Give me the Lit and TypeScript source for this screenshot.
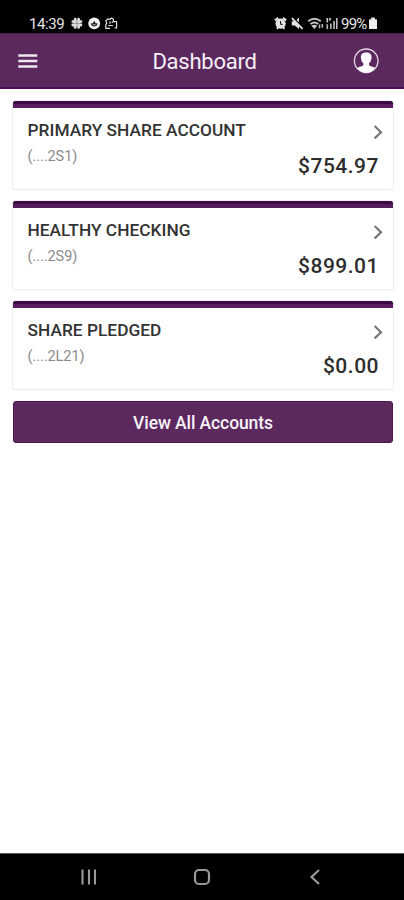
import { LitElement, html, css } from "lit";
import { customElement, property } from "lit/decorators.js";

@customElement("status-bar")
class StatusBar extends LitElement {
  static styles = css`
    :host { display: flex; justify-content: space-between; align-items: flex-start; height: 33px; background: #000; color: #e4e4e4; box-sizing: border-box; padding: 15px 26px 0 29px; font: 400 15px/17px Roboto, sans-serif; }
    .group { display: flex; height: 17px; align-items: center; }
    .time { letter-spacing: -0.4px; width: 41px; padding-top: 2px; }
    .percent { letter-spacing: -0.8px; width: 27px; padding-top: 2px; margin-left: -1px; }
    svg { display: block; flex: none; }
  `;
  render() {
    return html`
      <div class="group">
        <span class="time">14:39</span>
        <svg width="50" height="17" viewBox="0 0 50 17" fill="none" stroke="#dedede">
          <path d="M5.2 4.200V12.400M8.600 4.200V12.400M2.800 6.600H11M2.800 10H11" stroke-width="2.800" stroke-linecap="round"/>
          <path d="M6.900 3V13.600M1.600 8.300H12.200" stroke="#777" stroke-width=".6"/>
          <circle cx="24.200" cy="8.400" r="5.900" fill="#f0f0f0" stroke="none"/>
          <path d="M20.600 8.600l2.200-.3 1.400-2.500 1.400 2.500 2.200.3q-1 3-3.600 3t-3.600-3z" fill="#222" stroke="none"/>
          <path d="M22.800 9.800h2.800" stroke="#ddd" stroke-width=".8"/>
          <path d="M40 13.400h-4.200v-4l.9-.8-.8-3 2.300-1.700 1.500.5L41.600 3l1.800 1.300v2.300h3.200v6.300h-1.900" stroke-width="1.200" stroke-linejoin="round"/>
          <path d="M40 6.200v2.600M42.300 6.500v1.600M38.300 10.500h4.600" stroke-width="1.200"/>
        </svg>
      </div>
      <div class="group">
        <svg width="68" height="17" viewBox="0 0 68 17">
          <circle cx="6.600" cy="8.600" r="5.100" fill="#e4e4e4"/>
          <path d="M1 5.400l3.200-2.500M12.200 5.400L9 2.900M2.800 13.800l1.600-1.500M10.400 13.800l-1.600-1.500" stroke="#e4e4e4" stroke-width="2"/>
          <path d="M6.600 5.900v3.100l2 .6" stroke="#222" stroke-width="1.100" fill="none"/>
          <path d="M17.800 6.200h3l4.200-3.500v11.200l-4.200-3.500h-3z" fill="#e4e4e4"/>
          <path d="M19 2.600l10.200 10" stroke="#000" stroke-width="1.500"/>
          <path d="M17.900 3.200l10.700 10.600" stroke="#e4e4e4" stroke-width="1.800"/>
          <g fill="none" stroke="#c4c4c4" stroke-width="2">
            <path d="M34.200 6.300q6.300-5 12.600 0M36.500 9q3.900-3 7.800 0"/>
          </g>
          <path d="M37.400 10.800q2.900-2.200 5.800 0l-2.900 3.100z" fill="#ccc"/>
          <path d="M45.500 9.500v3.800M48.300 9v3.800" stroke="#bbb" stroke-width="1.500"/>
          <path d="M53.300 3v4.400M56 3v2.500" stroke="#c8c8c8" stroke-width="1.700"/>
          <path d="M53.300 9.300v4.800M56.800 8.500v5.600M60 6v8.100M62.800 3v11.100" stroke="#bbb" stroke-width="1.600"/>
        </svg>
        <span class="percent">99%</span>
        <svg width="10" height="17" viewBox="0 0 10 17"><path d="M3.200 2.600h3.600v1.600h1.400q.8 0 .8.800v8.200q0 .9-.8.900H1.800q-.8 0-.8-.9V5q0-.8.8-.8h1.400z" fill="#ececec"/></svg>
      </div>`;
  }
}

@customElement("account-card")
class AccountCard extends LitElement {
  @property() name = "";
  @property() mask = "";
  @property() balance = "";
  static styles = css`
    :host { display: block; box-sizing: border-box; height: 88px; background: #fff; border-radius: 3px; box-shadow: 0 0 0 1px #efefef, 0 1px 2px #e2e2e2; overflow: hidden; font-family: Roboto, sans-serif; }
    .bar { height: 7px; box-sizing: border-box; background: #561c5d; border-top: 3px solid #3a0c43; }
    .body { display: grid; grid-template-columns: 1fr auto; padding: 12px 9px 0 14.500px; }
    .name { font-size: 17.300px; line-height: 21px; font-weight: 500; color: #333; white-space: nowrap; letter-spacing: .03px; }
    .mask { font-size: 14.500px; line-height: 18px; color: #8a8a8a; margin-top: 7px; letter-spacing: -.05px; }
    .arrow { margin-top: 4px; display: block; }
    .balance { font-size: 21px; line-height: 26px; font-weight: 500; color: #2d2d2d; letter-spacing: .5px; text-align: right; margin: 13px 5px 0 0; }
    .left, .right { display: flex; flex-direction: column; }
    .right { align-items: flex-end; }
  `;
  render() {
    return html`
      <div class="bar"></div>
      <div class="body">
        <div class="left"><div class="name">${this.name}</div><div class="mask">${this.mask}</div></div>
        <div class="right">
          <svg class="arrow" width="12" height="16" viewBox="0 0 12 16"><path d="M2.600 2L9 8.200l-6.400 6.200" fill="none" stroke="#777" stroke-width="2.200"/></svg>
          <div class="balance">${this.balance}</div>
        </div>
      </div>`;
  }
}

const accounts = [
  { name: "PRIMARY SHARE ACCOUNT", mask: "(....2S1)", balance: "$754.97" },
  { name: "HEALTHY CHECKING", mask: "(....2S9)", balance: "$899.01" },
  { name: "SHARE PLEDGED", mask: "(....2L21)", balance: "$0.00" },
];

@customElement("app-root")
class AppRoot extends LitElement {
  static styles = css`
    :host { display: flex; flex-direction: column; height: 900px; background: #fff; font-family: Roboto, sans-serif; }
    header { height: 56px; flex: none; box-sizing: border-box; background: #5c295f; border-top: 1px solid #4b174f; border-bottom: 2px solid #4c0e55; display: grid; grid-template-columns: 60px 1fr 60px; align-items: center; color: #f6f0f6; }
    .menu { margin-left: 18px; display: block; }
    h1 { margin: 0; font-size: 22px; line-height: 26px; font-weight: 400; text-align: center; letter-spacing: -.25px; padding: 2px 0 0 5px; }
    .avatar { display: block; margin-left: 9px; }
    main { flex: 1; display: flex; flex-direction: column; gap: 12px; padding: 12px 11px 0 13px; }
    button { height: 42px; border: 1px solid #4c1551; border-radius: 3px; margin: 0; padding: 2px 0 0; background: #5c295f; color: #f8f3f8; font: 500 17.500px/20px Roboto, sans-serif; letter-spacing: -.1px; }
    nav { height: 47px; flex: none; box-sizing: border-box; border-top: 1px solid #555; background: #000; display: grid; grid-template-columns: repeat(3, 113px); padding-left: 32px; align-items: center; justify-items: center; }
    nav svg { display: block; }
  `;
  render() {
    return html`
      <status-bar></status-bar>
      <header>
        <svg class="menu" width="20" height="16" viewBox="0 0 20 16"><path d="M.3 2.500h19M.3 8h19M.3 13.500h19" stroke="#eee6ee" stroke-width="2.600"/></svg>
        <h1>Dashboard</h1>
        <svg class="avatar" width="26" height="26" viewBox="0 0 26 26">
          <circle cx="13.200" cy="12.800" r="11.800" fill="none" stroke="#e6d9e7" stroke-width="1.300"/>
          <path d="M13.200 4.500c-3.900 0-5.500 2.300-5.300 5.200.1 2.600 1.300 4.600 2.500 5.600v1.700c-.6 1.300-4 1.500-6.200 3.100a11.300 11.300 0 0 0 18 0c-2.200-1.600-5.600-1.800-6.200-3.100v-1.700c1.200-1 2.400-3 2.500-5.600.2-2.900-1.400-5.200-5.300-5.200z" fill="#fff"/>
        </svg>
      </header>
      <main>
        ${accounts.map((a) => html`<account-card .name=${a.name} .mask=${a.mask} .balance=${a.balance}></account-card>`)}
        <button>View All Accounts</button>
      </main>
      <nav>
        <svg width="16" height="18" viewBox="0 0 16 18"><path d="M1.500 1.500v15M8 1.500v15M14 1.500v15" stroke="#999" stroke-width="2.100"/></svg>
        <svg width="18" height="18" viewBox="0 0 18 18"><rect x="2" y="2" width="14" height="14" rx="4" fill="none" stroke="#999" stroke-width="2.200"/></svg>
        <svg width="12" height="18" viewBox="0 0 12 18"><path d="M10 2L2.500 9l7.500 7" fill="none" stroke="#999" stroke-width="2.200"/></svg>
      </nav>`;
  }
}
